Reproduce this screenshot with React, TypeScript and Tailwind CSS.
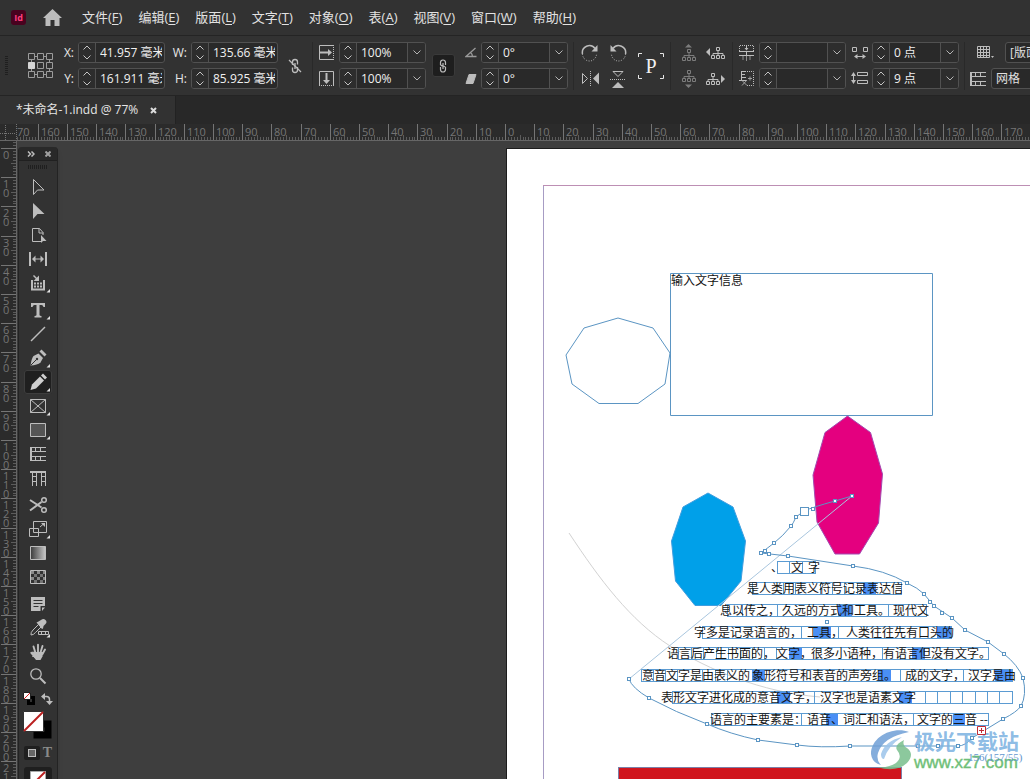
import React from 'react';

const MM = 2.92; // pixels per millimetre at the current zoom

const menus = [
  ['文件', 'F'],
  ['编辑', 'E'],
  ['版面', 'L'],
  ['文字', 'T'],
  ['对象', 'O'],
  ['表', 'A'],
  ['视图', 'V'],
  ['窗口', 'W'],
  ['帮助', 'H'],
];

/* ---------- control bar ---------- */

const Divider = ({ className = '' }: { className?: string }) => (
  <div className={`h-12 w-px shrink-0 bg-[#292929] ${className}`} />
);

const Stack = ({ className = '', children }: { className?: string; children: React.ReactNode }) => (
  <div className={`grid shrink-0 grid-rows-[21px_21px] gap-y-[5px] ${className}`}>{children}</div>
);

const Icon = ({ w = 18, h = 18, children }: { w?: number; h?: number; children: React.ReactNode }) => (
  <svg width={w} height={h} viewBox={`0 0 ${w} ${h}`} fill="none" stroke="#bdbdbd" aria-hidden="true">
    {children}
  </svg>
);

const IconButton = ({ label, children }: { label: string; children: React.ReactNode }) => (
  <button type="button" aria-label={label} className="flex h-full w-full items-center justify-center">
    {children}
  </button>
);

interface FieldProps {
  id: string;
  value: string;
  label?: string;
  dropdown?: boolean;
}

const Field = ({ id, value, label, dropdown }: FieldProps) => (
  <div className="flex h-[21px] w-[87px] overflow-hidden rounded-[3px] border border-[#515151] bg-[#292929]">
    <div className="flex w-[17px] shrink-0 flex-col border-r border-[#515151] bg-[#2d2d2d]">
      <button type="button" aria-label={`${label ?? id} +`} className="flex flex-1 items-center justify-center">
        <svg width="8" height="5" fill="none" stroke="#c4c4c4"><path d="M.5 4.500 4 1l3.500 3.500" /></svg>
      </button>
      <button type="button" aria-label={`${label ?? id} -`} className="flex flex-1 items-center justify-center">
        <svg width="8" height="5" fill="none" stroke="#c4c4c4"><path d="M.5.5 4 4 7.500.5" /></svg>
      </button>
    </div>
    <input
      id={id}
      aria-label={label}
      defaultValue={value}
      className="mr-0.5 w-0 min-w-0 flex-1 bg-transparent pl-1 text-xs text-[#f0f0f0] outline-none"
    />
    {dropdown && (
      <button
        type="button"
        aria-label={`${label} ▾`}
        className="flex w-[18px] shrink-0 items-center justify-center border-l border-[#515151] bg-[#2d2d2d]"
      >
        <svg width="8" height="5" fill="none" stroke="#b5b5b5"><path d="M.5.5 4 4 7.500.5" /></svg>
      </button>
    )}
  </div>
);

const FieldLabel = ({ id, children }: { id: string; children: string }) => (
  <label htmlFor={id} className="pr-1 text-right text-xs leading-[22px] text-[#e8e8e8]">{children}</label>
);

const ReferencePoint = () => (
  <svg width="26" height="26" fill="none" stroke="#9c9c9c" aria-hidden="true">
    <path d="M6.500 3.500h3M15.500 3.500h3M6.500 21.500h3M15.500 21.500h3M3.500 6.500v3M3.500 15.500v3M21.500 6.500v3M21.500 15.500v3" />
    <path d="M.5.5h6v6h-6zM9.500.5h6v6h-6zM18.500.5h6v6h-6zM9.500 9.500h6v6h-6zM18.500 9.500h6v6h-6zM.5 18.500h6v6h-6zM9.500 18.500h6v6h-6zM18.500 18.500h6v6h-6z" />
    <path d="M.5 9.500h6v6h-6z" fill="#d6d6d6" stroke="#d6d6d6" />
  </svg>
);

const Tree = ({ dir }: { dir: 'up' | 'down' | 'left' | 'right' }) => {
  const vertical = dir === 'up' || dir === 'down';
  const color = vertical ? '#7c7c7c' : '#bdbdbd';
  const shift = { up: 'translate(3 5)', down: 'translate(3 0)', left: 'translate(5 3)', right: 'translate(0 3)' }[dir];
  const arrow = {
    up: 'M6 3.500 9.500 0 13 3.500z',
    down: 'M6 14.500h7L9.500 18z',
    left: 'M0 8l4-4v8z',
    right: 'M19 9l-4-4v8z',
  }[dir];
  return (
    <svg width="19" height="18" fill="none" stroke={color} aria-hidden="true">
      <path d={arrow} fill={color} stroke="none" />
      <g transform={shift}>
        <path d="M5.500.5h3v3h-3zM.5 8.500h3v3h-3zM5.500 8.500h3v3h-3zM10.500 8.500h3v3h-3zM7 4v4M2 8V6.500h10V8" />
      </g>
    </svg>
  );
};

const Rotate = ({ ccw }: { ccw?: boolean }) => (
  <Icon>
    <g transform={ccw ? 'matrix(-1 0 0 1 18 0)' : undefined}>
      <path d="M1.500 10A7 7 0 0 1 14 4.500" strokeWidth="1.500" />
      <path d="M1.500 10a7 7 0 0 0 14 0" strokeDasharray="1 1.500" />
      <path d="M16.500 1v6.500h-6z" fill="#bdbdbd" stroke="none" />
    </g>
  </Icon>
);

const ControlBar = () => (
  <div className="flex h-[60px] shrink-0 items-center overflow-hidden border-b border-[#242424] pl-[5px]">
    <svg width="3" height="19" stroke="#1f1f1f" strokeWidth="3" className="shrink-0"><path d="M1.500 0v19" strokeDasharray="1 1" /></svg>
    <button type="button" aria-label="参考点" className="ml-5 shrink-0"><ReferencePoint /></button>
    <Stack className="ml-1 w-5">
      <FieldLabel id="pos-x">X:</FieldLabel>
      <FieldLabel id="pos-y">Y:</FieldLabel>
    </Stack>
    <Stack>
      <Field id="pos-x" value="41.957 毫米" />
      <Field id="pos-y" value="161.911 毫米" />
    </Stack>
    <Stack className="w-[26px]">
      <FieldLabel id="size-w">W:</FieldLabel>
      <FieldLabel id="size-h">H:</FieldLabel>
    </Stack>
    <Stack>
      <Field id="size-w" value="135.66 毫米" />
      <Field id="size-h" value="85.925 毫米" />
    </Stack>
    <div className="h-4 w-[34px] shrink-0">
      <IconButton label="约束宽度和高度的比例">
        <Icon w={14} h={16}>
          <path d="M4.500 7V4a2.500 2.500 0 0 1 5 0v2.500M9.500 9v3a2.500 2.500 0 0 1-5 0V9.500M7 5v6" strokeWidth="1.300" />
          <path d="M1 2l12 12" strokeWidth="1.300" />
        </Icon>
      </IconButton>
    </div>
    <Divider />
    <Stack className="w-[26px] place-items-center">
      <Icon w={15} h={15}>
        <path d="M14 .5H.5v14H14" />
        <path d="M14.500 0v15" strokeDasharray="1 1" />
        <path d="M1 7.500h9" strokeWidth="2" />
        <path d="M9 4l4 3.500L9 11z" fill="#bdbdbd" stroke="none" />
      </Icon>
      <Icon w={15} h={15}>
        <path d="M.5 14V.5h14V14" />
        <path d="M0 14.500h15" strokeDasharray="1 1" />
        <path d="M7.500 2v8" strokeWidth="2" />
        <path d="M4 9l3.500 4L11 9z" fill="#bdbdbd" stroke="none" />
      </Icon>
    </Stack>
    <Stack>
      <Field id="scale-x" label="X 缩放百分比" value="100%" dropdown />
      <Field id="scale-y" label="Y 缩放百分比" value="100%" dropdown />
    </Stack>
    <div className="flex w-[34px] shrink-0 justify-center">
      <button type="button" aria-label="约束缩放比例" className="flex size-[23px] items-center justify-center rounded-[3px] border border-[#3a3a3a] bg-[#1e1e1e]">
        <Icon w={8} h={14}>
          <path d="M1.500 6V3.500a2.500 2.500 0 0 1 5 0V6M6.500 8v2.500a2.500 2.500 0 0 1-5 0V8M1.500 5.500Q2 7 4 7t2.500 1.500M4 4v6" strokeWidth="1.200" />
        </Icon>
      </button>
    </div>
    <Stack className="w-[21px] place-items-center">
      <Icon w={12} h={11}>
        <path d="M10.500 1 1 9.500h10.500M5.500 5.500Q7.500 7 7.500 9.500" stroke="#9a9a9a" strokeWidth="1.300" />
      </Icon>
      <Icon w={12} h={10}>
        <path d="M4 .5h7L8 9.500H1z" fill="#bdbdbd" />
      </Icon>
    </Stack>
    <Stack>
      <Field id="rotation" label="旋转角度" value="0°" dropdown />
      <Field id="shear" label="X 切变角度" value="0°" dropdown />
    </Stack>
    <Divider className="ml-[5px]" />
    <Stack className="ml-0.5 grid-cols-[28px_28px]">
      <IconButton label="顺时针旋转 90°"><Rotate /></IconButton>
      <IconButton label="逆时针旋转 90°"><Rotate ccw /></IconButton>
      <IconButton label="水平翻转">
        <Icon>
          <path d="M1.500 3.500v10l5-5z" />
          <path d="M9.500 1v16" strokeDasharray="1 1" />
          <path d="M18 2.500v12l-6-6z" fill="#bdbdbd" stroke="none" />
        </Icon>
      </IconButton>
      <IconButton label="垂直翻转">
        <Icon>
          <path d="M4 1.500h10l-5 5z" />
          <path d="M1 9.500h16" strokeDasharray="1 1" />
          <path d="M3 18h12l-6-6z" fill="#bdbdbd" stroke="none" />
        </Icon>
      </IconButton>
    </Stack>
    <div className="relative flex h-[26px] w-[38px] shrink-0 items-center justify-center">
      <svg width="26" height="26" fill="none" stroke="#e6e6e6" className="absolute">
        <path d="M.5 4V.5H4M22 .5h3.500V4M25.500 22v3.500H22M4 25.500H.5V22" />
      </svg>
      <span className="font-['Liberation_Serif',serif] text-xl leading-5 text-[#f0f0f0]">P</span>
    </div>
    <Divider />
    <Stack className="ml-1 grid-cols-[27px_27px]">
      <IconButton label="选择容器"><Tree dir="up" /></IconButton>
      <IconButton label="选择上一对象"><Tree dir="left" /></IconButton>
      <IconButton label="选择内容"><Tree dir="down" /></IconButton>
      <IconButton label="选择下一对象"><Tree dir="right" /></IconButton>
    </Stack>
    <Divider className="ml-[3px]" />
    <Stack className="w-[26px] place-items-center">
      <Icon w={15} h={16}>
        <path d="M.5 6V.5h14V6" strokeDasharray="1 1" />
        <path d="M7.500 1v3" />
        <path d="M5.500 3h4l-2 2.500z" fill="#bdbdbd" stroke="none" />
        <path d="M0 6.500h15M0 10.500h15M7.500 7v3" />
        <path d="M4 11v4M7.500 11v5M11 11v4" stroke="#8d8d8d" />
      </Icon>
      <Icon w={15} h={15}>
        <path d="M8 .5h6.500v14H8" strokeDasharray="1 1" />
        <path d="M2.500 0v9M2 .5h5M2 3.500h4M2 6.500h5M0 9.500h8" />
        <path d="M3 14.500 8 9M3 9.500l5 5M9 7.500h4M11 5.500v4" stroke="#a0a0a0" />
      </Icon>
    </Stack>
    <Stack>
      <Field id="inset-y" label="垂直缩放" value="" dropdown />
      <Field id="inset-x" label="水平缩放" value="" dropdown />
    </Stack>
    <Stack className="w-[26px] place-items-center">
      <Icon w={17} h={13}>
        <path d="M1.500 1.500h4v4h-4zM12.500 1.500h4v4h-4zM4 10.500h10" />
        <path d="M6.500 8v5L3 10.500zM11.500 8v5l3.500-2.500z" fill="#bdbdbd" stroke="none" />
      </Icon>
      <Icon w={17} h={13}>
        <path d="M6.500.5h10v3h-10zM6.500 8.500h10v3h-10zM2.500 3v6" />
        <path d="M0 4l2.500-4L5 4zM0 8h5l-2.500 4z" fill="#bdbdbd" stroke="none" />
      </Icon>
    </Stack>
    <Stack>
      <Field id="char-gap" label="字间距" value="0 点" dropdown />
      <Field id="line-gap" label="行间距" value="9 点" dropdown />
    </Stack>
    <Divider className="ml-[5px]" />
    <Stack className="min-w-0">
      <div className="flex items-center">
        <div className="flex w-10 justify-center">
          <Icon w={17} h={13}>
            <path d="M.5.5h12v11H.5zM3.500 0v12M6.500 0v12M9.500 0v12M0 3.500h13M0 6.500h13M0 9.500h13" />
            <path d="M14 10h3l-1.500 2z" fill="#bdbdbd" stroke="none" />
          </Icon>
        </div>
        <select aria-label="命名网格" className="h-[21px] w-32 appearance-none rounded-[3px] border border-[#515151] bg-[#292929] px-1 text-xs text-[#e0e0e0]">
          <option>[版面网格]</option>
        </select>
      </div>
      <div className="flex items-center">
        <div className="flex w-[26px] justify-center">
          <Icon w={16} h={14}>
            <path d="M1 0v14" strokeWidth="2" />
            <path d="M0 .5h16M0 4.500h16M0 9.500h16M0 13.500h16M5.500 1v3M10.500 1v3M5.500 10v3M10.500 10v3" />
          </Icon>
        </div>
        <select aria-label="框架类型" className="h-[21px] w-32 appearance-none rounded-[3px] border border-[#515151] bg-[#292929] px-1 text-xs text-[#e0e0e0]">
          <option>网格</option>
        </select>
      </div>
    </Stack>
  </div>
);

/* ---------- rulers ---------- */

const HorizontalRuler = () => {
  const ticks = Array.from({ length: 590 }, (_, i) => i - 169);
  return (
    <svg className="block h-4 w-full" fill="#757575" fontSize="11" aria-hidden="true">
      {ticks.map((mm) => {
        const x = Math.round(505 + mm * MM) + 0.5;
        const top = mm % 10 === 0 ? 0 : mm % 5 === 0 ? 11 : 13;
        return <line key={mm} x1={x} x2={x} y1={top} y2="16" stroke={mm % 10 === 0 ? '#757575' : '#5c5c5c'} />;
      })}
      {ticks.filter((mm) => mm % 10 === 0).map((mm) => (
        <text key={mm} x={Math.round(505 + mm * MM) + 3} y="12">{Math.abs(mm)}</text>
      ))}
      <rect width="16" height="16" fill="#2b2b2b" />
      <path d="M5.500 1v15M0 9.500h15M16.500 0v16" fill="none" stroke="#757575" strokeDasharray="1 1" />
      <text x="17" y="12">70</text>
    </svg>
  );
};

const VerticalRuler = () => {
  const ticks = Array.from({ length: 400 }, (_, i) => i - 2);
  return (
    <svg className="block h-full w-4" fill="#757575" fontSize="11" aria-hidden="true">
      {ticks.map((mm) => {
        const y = Math.round(7 + mm * MM) + 0.5;
        const left = mm % 10 === 0 ? 1 : mm % 5 === 0 ? 11 : 13;
        return <line key={mm} y1={y} y2={y} x1={left} x2="16" stroke={mm % 10 === 0 ? '#757575' : '#5c5c5c'} />;
      })}
      {ticks.filter((mm) => mm >= 0 && mm % 10 === 0).map((mm) =>
        String(mm).split('').map((digit, i) => (
          <text key={`${mm}-${i}`} x="3" y={Math.round(7 + mm * MM) + 11 + i * 9}>{digit}</text>
        ))
      )}
    </svg>
  );
};

/* ---------- toolbox ---------- */

interface Tool {
  name: string;
  flyout?: boolean;
  active?: boolean;
  art: React.ReactNode;
}

const toolGroups: Tool[][] = [
  [
    { name: '选择工具', art: <path d="M9.500 4.500v15l4-4.500h6.500z" /> },
    { name: '直接选择工具', art: <path d="M9 4v16l4.500-5H20.500z" fill="#bdbdbd" stroke="none" /> },
    {
      name: '页面工具',
      art: (
        <>
          <path d="M17 18.500H8.500v-13h7l3.500 4V12M15 5.500V10h4.500" />
          <path d="M17 12v8l2-2h3.500z" fill="#bdbdbd" stroke="none" />
        </>
      ),
    },
    {
      name: '间隙工具',
      art: (
        <>
          <path d="M6 5v14M22 5v14" strokeWidth="2" />
          <path d="M9 12h10" />
          <path d="M11.500 8.500v7L8 12zM16.500 8.500v7L20 12z" fill="#bdbdbd" stroke="none" />
        </>
      ),
    },
    {
      name: '内容收集器工具',
      flyout: true,
      art: (
        <>
          <path d="M8 9v9.500h12V9" strokeWidth="2" />
          <path d="M10 12.500h8M10 15.500h8" strokeDasharray="2 1" strokeWidth="2" />
          <path d="M9.500 4.500l4 4" strokeWidth="1.500" />
          <path d="M15 4.500V10H9.500z" fill="#bdbdbd" stroke="none" />
        </>
      ),
    },
  ],
  [
    {
      name: '文字工具',
      flyout: true,
      art: <path d="M7 5h14v4h-1.500Q19 7 17.500 7H15.500v10q0 1 2 1v1.500h-7V18q2 0 2-1V7h-2Q9 7 8.500 9H7z" fill="#bdbdbd" stroke="none" />,
    },
    { name: '直线工具', art: <path d="M7 19 21 5" strokeWidth="1.500" /> },
    {
      name: '钢笔工具',
      flyout: true,
      art: (
        <>
          <path d="M6.500 19.500q1-7 3-9.500l5-2.500 4.500 4.500-2.500 4.500q-3 2.500-10 3z" fill="#bdbdbd" stroke="none" />
          <path d="M15.500 5.500l2-2 5 5-2 2z" fill="#bdbdbd" stroke="none" />
          <path d="M7 19l5.500-5.500" stroke="#323232" />
          <circle cx="13" cy="13" r="1.200" fill="#323232" stroke="none" />
        </>
      ),
    },
    {
      name: '铅笔工具',
      flyout: true,
      active: true,
      art: (
        <>
          <path d="M8 14.500l8-8 4 4-8 8-5.500 1.500z" fill="#cfcfcf" stroke="none" />
          <path d="M17 5.500l2-2 4 4-2 2z" fill="#cfcfcf" stroke="none" />
        </>
      ),
    },
    { name: '矩形框架工具', flyout: true, art: <path d="M6.500 5.500h15v13h-15zM6.500 5.500l15 13M21.500 5.500l-15 13" /> },
    { name: '矩形工具', flyout: true, art: <path d="M6.500 5.500h15v13h-15z" fill="#555" /> },
    {
      name: '水平网格工具',
      art: (
        <>
          <path d="M7 5v14" strokeWidth="2" />
          <path d="M6 5.500h16M6 9.500h16M6 14.500h16M6 18.500h16M11.500 5v4M16.500 5v4M11.500 14v4M16.500 14v4" />
        </>
      ),
    },
    {
      name: '垂直网格工具',
      art: (
        <>
          <path d="M6 6h16" strokeWidth="2" />
          <path d="M8.500 5v15M12.500 5v15M17.500 5v15M21.500 5v15M8 10.500h4M8 15.500h4M17 10.500h4M17 15.500h4" />
        </>
      ),
    },
  ],
  [
    {
      name: '剪刀工具',
      art: (
        <>
          <path d="M6 7l11.500 7.500M6 17.500 17.500 9" strokeWidth="2" />
          <circle cx="20" cy="7" r="2.300" strokeWidth="1.500" />
          <circle cx="20" cy="17" r="2.300" strokeWidth="1.500" />
        </>
      ),
    },
    {
      name: '自由变换工具',
      flyout: true,
      art: (
        <>
          <path d="M9.500 4.500h13v11h-13zM5.500 11.500h9v8h-9zM16 10l4-3.500" />
          <path d="M17 6h4v4z" fill="#bdbdbd" stroke="none" />
        </>
      ),
    },
    {
      name: '渐变色板工具',
      art: (
        <>
          <linearGradient id="swatch">
            <stop stopColor="#3a3a3a" />
            <stop offset="1" stopColor="#c8c8c8" />
          </linearGradient>
          <path d="M6.500 5.500h15v13h-15z" fill="url(#swatch)" />
        </>
      ),
    },
    {
      name: '渐变羽化工具',
      art: (
        <>
          <path d="M7 7.500h14M7 13.500h14" stroke="#8a8a8a" strokeWidth="3" strokeDasharray="3 3" />
          <path d="M10 10.500h11M10 16.500h11" stroke="#747474" strokeWidth="3" strokeDasharray="3 3" />
          <path d="M6.500 5.500h15v13h-15z" />
        </>
      ),
    },
  ],
  [
    {
      name: '附注工具',
      art: (
        <>
          <path d="M7 5h14v9h-4.500v5H7z" fill="#bdbdbd" stroke="none" />
          <path d="M18 15.500h3l-3 3.500z" fill="#bdbdbd" stroke="none" />
          <path d="M9.500 8.500h9M9.500 11.500h9M9.500 14.500h5" stroke="#323232" />
        </>
      ),
    },
    {
      name: '颜色主题工具',
      flyout: true,
      art: (
        <>
          <path d="M7 19q-.5-2.500 2-5l5.500-5.500 2.500 2.500-5.500 5.500Q9.500 19 7 19z" />
          <path d="M12.500 6.500l2-1L17 4q2.500-2 4.500 0t0 4L19.500 10l-.5 2.500-1 .5z" fill="#bdbdbd" stroke="none" />
          <path d="M14.500 15.500h10v3h-10z" fill="#323232" />
          <path d="M17.500 16v2M21.500 16v2" />
        </>
      ),
    },
    {
      name: '抓手工具',
      art: (
        <>
          <path
            d="M9 12.500V16M11.500 13 9.500 6.500M14 12V4.800M16.500 12.500l2-6.500M18.500 14l2.500-4.500M7.300 12.800l3.500 4"
            strokeWidth="1.900"
            strokeLinecap="round"
          />
          <path d="M9.500 12h9.500l-.5 4.500-2 3.500h-4.500L9 16z" fill="#bdbdbd" stroke="none" />
        </>
      ),
    },
    {
      name: '缩放显示工具',
      art: (
        <>
          <circle cx="12" cy="10" r="5.200" strokeWidth="1.300" />
          <path d="M16 14l5.500 5.500" strokeWidth="2" />
        </>
      ),
    },
  ],
];

const ToolButton = ({ tool }: { tool: Tool }) => (
  <button
    type="button"
    aria-label={tool.name}
    className={`block h-6 w-7 rounded-[3px] ${tool.active ? 'bg-[#1f1f1f] ring-1 ring-[#3d3d3d] ring-inset' : ''}`}
  >
    <svg width="28" height="24" fill="none" stroke="#bdbdbd">
      {tool.art}
      {tool.flyout && <path d="M26 18v3.500h-3.500z" fill="#e0e0e0" stroke="none" />}
    </svg>
  </button>
);

const Toolbox = () => (
  <aside className="absolute top-1.5 left-px flex w-10 flex-col items-center rounded-t-[4px] border-x border-[#232323] bg-[#323232] shadow-md">
    <div className="flex h-3.5 w-full shrink-0 items-center justify-between rounded-t-[4px] border-b border-[#202020] bg-[#292929] pr-1.5 pl-2">
      <button type="button" aria-label="展开">
        <svg width="8" height="6" fill="none" stroke="#bdbdbd" strokeWidth="1.500"><path d="M1 .5 3.500 3 1 5.500M4.500.5 7 3 4.500 5.500" /></svg>
      </button>
      <button type="button" aria-label="关闭">
        <svg width="6" height="6" stroke="#a0a0a0" strokeWidth="2"><path d="M.5.5l5 5M5.500.5l-5 5" /></svg>
      </button>
    </div>
    <svg width="20" height="4" className="mt-1" stroke="#1f1f1f" strokeWidth="4"><path d="M0 2h20" strokeDasharray="1 1" /></svg>
    <div className="mt-[6px] flex flex-col gap-[3px]">
      {toolGroups.map((group) => (
        <div key={group[0].name}>
          {group.map((tool) => <ToolButton key={tool.name} tool={tool} />)}
        </div>
      ))}
    </div>
    <div className="mt-1 flex w-[30px] items-center justify-between">
      <button type="button" aria-label="默认填色和描边">
        <svg width="12" height="13">
          <path d="M5.500 5.500h5v6h-5z" fill="none" stroke="#000" strokeWidth="3" />
          <path d="M.5.5h7v7h-7z" fill="#fff" stroke="#222" />
          <path d="M1 7 7 1" stroke="#d22" />
        </svg>
      </button>
      <button type="button" aria-label="互换填色和描边">
        <svg width="12" height="12" fill="none" stroke="#bdbdbd" strokeWidth="1.500">
          <path d="M3 3.500h2.500q3 0 3 3V9" />
          <path d="M4 0v7L0 3.500zM5 8h7l-3.500 4z" fill="#bdbdbd" stroke="none" />
        </svg>
      </button>
    </div>
    <button type="button" aria-label="填色和描边" className="mt-1.5">
      <svg width="30" height="30">
        <path d="M14 13h11v11H14z" fill="#323232" stroke="#000" strokeWidth="7" />
        <path d="M.5.5h20v20H.5z" fill="#fff" stroke="#323232" />
        <path d="M1 20 20 1" stroke="#bb2020" strokeWidth="2" />
      </svg>
    </button>
    <div className="mt-1 flex h-4 w-7 items-center justify-between">
      <button type="button" aria-label="格式针对容器" className="flex h-3.5 w-4 items-center justify-center rounded-[2px] bg-[#1f1f1f]">
        <span className="block size-2 border border-[#bdbdbd] bg-[#666]" />
      </button>
      <button type="button" aria-label="格式针对文本" className="font-['Liberation_Serif',serif] text-sm leading-4 font-bold text-[#8a8a8a]">T</button>
    </div>
    <button type="button" aria-label="应用无" className="mt-1.5 flex h-7 w-7 justify-center rounded-[3px] bg-[#1f1f1f] pt-1">
      <svg width="16" height="16">
        <path d="M.5.5h15v15H.5z" fill="#fff" stroke="#aaa" />
        <path d="M1 15 15 1" stroke="#bb2020" strokeWidth="2" />
      </svg>
    </button>
  </aside>
);

/* ---------- document page ---------- */

interface GridRow {
  y: number;
  box: [number, number];
  seps: number[];
  marks: [number, number][];
  runs: [number, string][];
}

const rows: GridRow[] = [
  { y: 561, box: [777, 815], seps: [789, 802], marks: [], runs: [[771, '、'], [791, '文'], [808, '字']] },
  {
    y: 582, box: [752, 901], seps: [783, 795, 820, 832, 844, 857], marks: [[863, 876]],
    runs: [[747, '是人类用表义符号记录表达信']],
  },
  {
    y: 604, box: [727, 926], seps: [742, 777, 888], marks: [[838, 852]],
    runs: [[720, '息以传之，'], [782, '久远的方式和工具。'], [893, '现代文']],
  },
  {
    y: 626, box: [702, 951], seps: [801, 838], marks: [[814, 831], [937, 951]],
    runs: [[694, '字多是记录语言的，'], [807, '工具，'], [846, '人类往往先有口头的']],
  },
  {
    y: 647, box: [678, 988], seps: [691, 703, 716, 728, 740, 752, 764, 776, 882], marks: [[789, 802], [912, 925]],
    runs: [[667, '语言后产生书面的，'], [776, '文字，'], [811, '很多小语种，'], [883, '有语言但没有文字。']],
  },
  {
    y: 669, box: [641, 1012], seps: [653, 665, 677, 702, 715, 727, 900, 963], marks: [[752, 765], [878, 891], [995, 1012]],
    runs: [[642, '意音文字是由表义的'], [752, '象形符号和表音的声旁组。'], [905, '成的文字，'], [968, '汉字是由']],
  },
  {
    y: 691, box: [672, 1012], seps: [814, 925, 937, 950, 962, 975, 987, 999], marks: [[777, 790], [899, 912]],
    runs: [[661, '表形文字进化成的意音文字，'], [820, '汉字也是语素文字']],
  },
  {
    y: 713, box: [711, 988], seps: [801, 913], marks: [[826, 838], [953, 965]],
    runs: [[710, '语言的主要素是：'], [807, '语音、'], [843, '词汇和语法，'], [917, '文字的三音 --']],
  },
];

const anchors = [
  [852, 496], [835, 501], [813, 509], [796, 517], [791, 526], [774, 543], [765, 551], [761, 553], [769, 554], [788, 556],
  [853, 566], [907, 583], [924, 594], [930, 602], [934, 606], [942, 613], [952, 618], [965, 630], [988, 642], [1004, 654],
  [1023, 678], [1021, 706], [1003, 719], [972, 738], [958, 746], [938, 746], [918, 746], [850, 746], [797, 745], [758, 740],
  [707, 724], [649, 698], [629, 679], [827, 622],
];

const blob =
  'M852 496 835 501Q813 507 804 511L796 517Q793 524 791 526 783 536 774 543L761 553 788 556 853 566Q885 570 907 583 918 588 924 594' +
  'L934 606 952 618 965 630 988 642 1004 654Q1018 665 1023 678 1027 695 1021 706 1017 712 1003 719L972 738Q965 746 958 746' +
  'L850 746Q820 748 797 745L758 740Q730 734 707 724 675 712 649 698 632 688 629 679';

const DocumentPage = () => (
  <main className="absolute top-[7px] right-0 bottom-0 left-[489px] border-t border-l border-[#1c1c1c] bg-white">
    <svg className="block h-full w-full font-['Noto_Sans_CJK_SC',sans-serif]" fill="none">
      <g transform="translate(-507 -149)">
        <path d="M543.500 185V1600" stroke="#a79cc4" />
        <path d="M543 185.500H2400" stroke="#bd8fb4" />

        <path d="M569 533C600 580 630 620 670 646 710 670 760 692 820 697" stroke="#d2d2d2" />
        <path d="M618 318 653 328 670 353 665 384 638 403.500H599L572 384 566 355 584 328z" stroke="#5b95c3" />
        <path d="M670.500 273.500h262v142h-262z" stroke="#5b95c3" />
        <text x="671" y="285" fontSize="12" fill="#111">输入文字信息</text>

        <path d="M847.500 416 870.500 432.500 882.500 474 878.500 523 859.500 554H835L817 522 813 475 825 432.500z" fill="#e4007f" stroke="#a34bb0" />
        <path d="M708 493 733 507 745.500 541 741 581 721 605.500H695L675.500 581 671.500 541 683 507z" fill="#00a0e9" stroke="#3f9ddf" />

        {rows.map((row) => (
          <g key={row.y}>
            {row.marks.map(([a, b]) => <rect key={a} x={a} y={row.y} width={b - a} height="13" fill="#4a8ff5" />)}
            <rect x={row.box[0] + 0.5} y={row.y + 0.5} width={row.box[1] - row.box[0]} height="12" stroke="#5b9bd2" />
            {row.seps.map((x) => <line key={x} x1={x + 0.5} x2={x + 0.5} y1={row.y} y2={row.y + 12} stroke="#5b9bd2" />)}
            {row.runs.map(([x, text]) => (
              <text key={x} x={x} y={row.y + 11} fontSize="12" fill="#161616">{text}</text>
            ))}
          </g>
        ))}

        <path d="M629 679 852 496" stroke="#a9c6de" />
        <path d={blob} stroke="#5b95c3" />
        {anchors.map(([x, y]) => (
          <rect key={`${x}-${y}`} x={x - 1.5} y={y - 1.5} width="3" height="3" fill="#fff" stroke="#5b95c3" />
        ))}
        <rect x="800.500" y="507.500" width="8" height="8" fill="#fff" stroke="#5b95c3" />

        <rect x="618.500" y="767.500" width="283" height="400" fill="#d0151d" stroke="#7b7fa8" />

        <g opacity="0.850">
          <path d="M909 732C894 726 871 736 871 754q1 9 10 11-5-5-3-12 5-16 31-21z" fill="#6f9fd6" />
          <path d="M902 737q-17 4-21 17 0 5 3 5 4-13 18-22z" fill="#9cc4ea" />
          <path d="M904 740q-10 5-7 10 6 7-1 13-7 5-19 4 19 6 30-4 8-9 0-15-5-3-3-8z" fill="#79bf8d" />
        </g>
        <text x="914" y="749" fontSize="21" fontWeight="700" fill="#7fb4e2" fillOpacity="0.900">极光下载站</text>
        <text x="914" y="768" fontSize="17" fill="#6fbf78" stroke="#6fbf78" strokeWidth="0.400" className="font-['Liberation_Sans',sans-serif]">www.xz7.com</text>
        <text x="968" y="761" fontSize="11" fill="#6497cf" className="font-['Liberation_Serif',serif]">156(157/55)</text>
        <path d="M977.500 726.500h8v8h-8z" fill="#fff" stroke="#c22b36" />
        <path d="M979 730.500h5M981.500 728v5" stroke="#c22b36" />
      </g>
    </svg>
  </main>
);

export default function App() {
  return (
    <div className="flex h-screen flex-col overflow-hidden bg-[#323232] font-['Open_Sans','Noto_Sans_CJK_SC',sans-serif]">
      <header className="flex h-9 shrink-0 items-center border-b border-[#242424] pl-[11px]">
        <span className="flex size-[15px] items-center justify-center rounded-[3px] bg-[#49021f] text-[9px] leading-none font-bold text-[#ff3f7f]">Id</span>
        <button type="button" aria-label="主页" className="ml-[17px]">
          <svg width="19" height="17" fill="#bdbdbd"><path d="M9.500 0 19 9h-2.500v8h-5v-6h-4v6h-5V9H0z" /></svg>
        </button>
        <nav className="ml-5 flex gap-4 text-[13px] text-[#e2e2e2]">
          {menus.map(([name, key]) => (
            <button type="button" key={key} className="whitespace-nowrap">
              {name}(<span className="underline underline-offset-2">{key}</span>)
            </button>
          ))}
        </nav>
      </header>

      <ControlBar />

      <div className="flex h-7 shrink-0 bg-[#282828]" role="tablist">
        <div className="flex items-center gap-3 border-r border-[#222] bg-[#323232] pr-[18px] pl-4 text-xs text-[#e6e6e6]">
          <button type="button" role="tab" aria-selected="true" className="whitespace-nowrap">*未命名-1.indd @ 77%</button>
          <button type="button" aria-label="关闭文档">
            <svg width="7" height="7" stroke="#dcdcdc" strokeWidth="2"><path d="M1 1l5 5M6 1 1 6" /></svg>
          </button>
        </div>
      </div>

      <div className="shrink-0 border-b border-[#666] bg-[#2b2b2b]">
        <HorizontalRuler />
      </div>

      <div className="flex min-h-0 flex-1">
        <div className="shrink-0 overflow-hidden border-r border-[#666] bg-[#2b2b2b]">
          <VerticalRuler />
        </div>
        <div className="relative min-w-0 flex-1 overflow-hidden bg-[#3e3e3e]">
          <DocumentPage />
          <Toolbox />
        </div>
      </div>
    </div>
  );
}
